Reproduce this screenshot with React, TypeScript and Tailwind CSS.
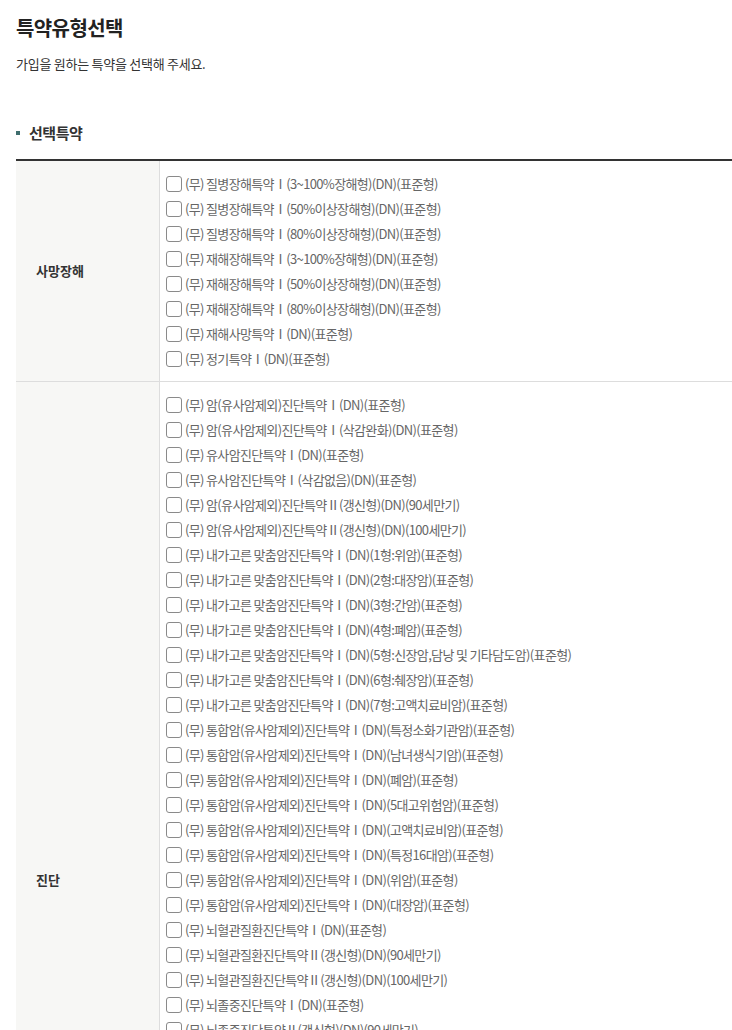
const deathItems = [
	"(무) 질병장해특약Ⅰ(3~100%장해형)(DN)(표준형)",
	"(무) 질병장해특약Ⅰ(50%이상장해형)(DN)(표준형)",
	"(무) 질병장해특약Ⅰ(80%이상장해형)(DN)(표준형)",
	"(무) 재해장해특약Ⅰ(3~100%장해형)(DN)(표준형)",
	"(무) 재해장해특약Ⅰ(50%이상장해형)(DN)(표준형)",
	"(무) 재해장해특약Ⅰ(80%이상장해형)(DN)(표준형)",
	"(무) 재해사망특약Ⅰ(DN)(표준형)",
	"(무) 정기특약Ⅰ(DN)(표준형)",
]

const diagItems = [
	"(무) 암(유사암제외)진단특약Ⅰ(DN)(표준형)",
	"(무) 암(유사암제외)진단특약Ⅰ(삭감완화)(DN)(표준형)",
	"(무) 유사암진단특약Ⅰ(DN)(표준형)",
	"(무) 유사암진단특약Ⅰ(삭감없음)(DN)(표준형)",
	"(무) 암(유사암제외)진단특약Ⅱ(갱신형)(DN)(90세만기)",
	"(무) 암(유사암제외)진단특약Ⅱ(갱신형)(DN)(100세만기)",
	"(무) 내가고른 맞춤암진단특약Ⅰ(DN)(1형:위암)(표준형)",
	"(무) 내가고른 맞춤암진단특약Ⅰ(DN)(2형:대장암)(표준형)",
	"(무) 내가고른 맞춤암진단특약Ⅰ(DN)(3형:간암)(표준형)",
	"(무) 내가고른 맞춤암진단특약Ⅰ(DN)(4형:폐암)(표준형)",
	"(무) 내가고른 맞춤암진단특약Ⅰ(DN)(5형:신장암,담낭 및 기타담도암)(표준형)",
	"(무) 내가고른 맞춤암진단특약Ⅰ(DN)(6형:췌장암)(표준형)",
	"(무) 내가고른 맞춤암진단특약Ⅰ(DN)(7형:고액치료비암)(표준형)",
	"(무) 통합암(유사암제외)진단특약Ⅰ(DN)(특정소화기관암)(표준형)",
	"(무) 통합암(유사암제외)진단특약Ⅰ(DN)(남녀생식기암)(표준형)",
	"(무) 통합암(유사암제외)진단특약Ⅰ(DN)(폐암)(표준형)",
	"(무) 통합암(유사암제외)진단특약Ⅰ(DN)(5대고위험암)(표준형)",
	"(무) 통합암(유사암제외)진단특약Ⅰ(DN)(고액치료비암)(표준형)",
	"(무) 통합암(유사암제외)진단특약Ⅰ(DN)(특정16대암)(표준형)",
	"(무) 통합암(유사암제외)진단특약Ⅰ(DN)(위암)(표준형)",
	"(무) 통합암(유사암제외)진단특약Ⅰ(DN)(대장암)(표준형)",
	"(무) 뇌혈관질환진단특약Ⅰ(DN)(표준형)",
	"(무) 뇌혈관질환진단특약Ⅱ(갱신형)(DN)(90세만기)",
	"(무) 뇌혈관질환진단특약Ⅱ(갱신형)(DN)(100세만기)",
	"(무) 뇌졸중진단특약Ⅰ(DN)(표준형)",
	"(무) 뇌졸중진단특약Ⅱ(갱신형)(DN)(90세만기)",
	"(무) 뇌졸중진단특약Ⅱ(갱신형)(DN)(100세만기)",
	"(무) 뇌출혈진단특약Ⅰ(DN)(표준형)",
	"(무) 뇌출혈진단특약Ⅱ(갱신형)(DN)(90세만기)",
	"(무) 뇌출혈진단특약Ⅱ(갱신형)(DN)(100세만기)",
	"(무) 허혈심장질환진단특약Ⅰ(DN)(표준형)",
	"(무) 허혈심장질환진단특약Ⅱ(갱신형)(DN)(90세만기)",
	"(무) 허혈심장질환진단특약Ⅱ(갱신형)(DN)(100세만기)",
	"(무) 급성심근경색증진단특약Ⅰ(DN)(표준형)",
	"(무) 급성심근경색증진단특약Ⅱ(갱신형)(DN)(90세만기)",
	"(무) 급성심근경색증진단특약Ⅱ(갱신형)(DN)(100세만기)",
	"(무) 특정심장질환진단특약Ⅰ(DN)(표준형)",
	"(무) 중증질환진단특약Ⅰ(DN)(표준형)",
	"(무) 당뇨병진단특약Ⅰ(DN)(표준형)",
]

const groups = [
	{ label: "사망장해", items: deathItems },
	{ label: "진단", items: diagItems },
]

const Row = ({ label, items }: { label: string; items: string[] }) => (
	<div className="flex border-b border-[#dddddd]">
		<div className="w-[144px] shrink-0 bg-[#f7f7f5] border-r border-[#dddddd] flex items-center pl-5 text-[13px] font-bold text-[#333333]">
			{label}
		</div>
		<ul className="flex-1 py-[10px] pl-[6px]">
			{items.map((t) => (
				<li key={t} className="h-[25px] flex items-center">
					<label className="flex items-center gap-[3px] cursor-pointer">
						<input
							type="checkbox"
							className="appearance-none w-[16px] h-[16px] rounded-[3px] border border-[#8a8a8a] bg-white shrink-0"
						/>
						<span className="text-[13px] text-[#666666] tracking-[-0.05em] whitespace-nowrap">
							{t}
						</span>
					</label>
				</li>
			))}
		</ul>
	</div>
)

const App = () => {
	return (
		<div
			className="bg-white min-h-screen pl-4 pt-[12px]"
			style={{ fontFamily: "'Noto Sans CJK KR', 'Noto Sans', sans-serif" }}>
			<h1 className="text-[20px] font-bold text-[#222222] tracking-[-0.03em] leading-[32px]">
				특약유형선택
			</h1>
			<p className="mt-[10px] text-[13px] text-[#333333] tracking-[-0.02em]">
				가입을 원하는 특약을 선택해 주세요.
			</p>

			<div className="mt-[48px] flex items-center gap-[9px]">
				<span className="w-[4px] h-[4px] bg-[#3f6e6e]" />
				<h2 className="text-[15px] font-bold text-[#333333] tracking-[-0.03em]">
					선택특약
				</h2>
			</div>

			<div className="mt-[15px] border-t-2 border-[#333333]">
				{groups.map((g) => (
					<Row key={g.label} label={g.label} items={g.items} />
				))}
			</div>
		</div>
	)
}

export default App
